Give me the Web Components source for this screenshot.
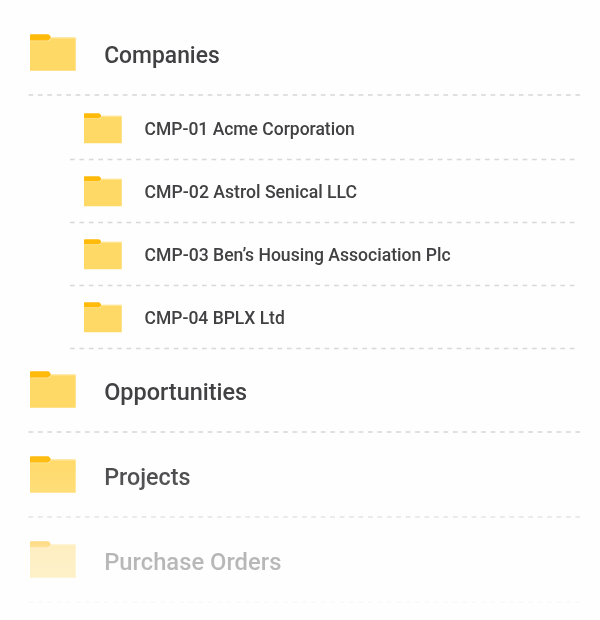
<!DOCTYPE html>
<html lang="en">
<head>
<meta charset="utf-8">
<title>Folders</title>
<style>
  body {
    margin: 0;
    background: #fefefe;
    color: #414042;
    font-family: Roboto, "Liberation Sans", sans-serif;
    font-weight: 500;
  }
</style>
</head>
<body>
<folder-tree>
  <folder-row label="Companies" fit="115.5"></folder-row>
  <folder-group>
    <folder-row small label="CMP-01 Acme Corporation" fit="210.2"></folder-row>
    <folder-row small label="CMP-02 Astrol Senical LLC" fit="212.5"></folder-row>
    <folder-row small label="CMP-03 Ben’s Housing Association Plc" fit="306"></folder-row>
    <folder-row small label="CMP-04 BPLX Ltd" fit="140.2"></folder-row>
  </folder-group>
  <folder-row label="Opportunities" fit="142.9"></folder-row>
  <folder-row label="Projects" fit="86.2"></folder-row>
  <folder-row label="Purchase Orders" fit="177.2"></folder-row>
</folder-tree>

<script>
class FolderTree extends HTMLElement {
  constructor() {
    super();
    this.attachShadow({ mode: 'open' }).innerHTML = `
      <style>
        :host {
          display: block;
          box-sizing: border-box;
          height: 620px;
          padding: 11px 19px 0 28px;
          overflow: hidden;
          -webkit-mask-image: linear-gradient(#000 450px, rgba(0,0,0,.88) 492px, rgba(0,0,0,.66) 517px, rgba(0,0,0,.52) 541px, rgba(0,0,0,.39) 549px, rgba(0,0,0,.35) 577px, rgba(0,0,0,.14) 602px, transparent 612px);
          mask-image: linear-gradient(#000 450px, rgba(0,0,0,.88) 492px, rgba(0,0,0,.66) 517px, rgba(0,0,0,.52) 541px, rgba(0,0,0,.39) 549px, rgba(0,0,0,.35) 577px, rgba(0,0,0,.14) 602px, transparent 612px);
        }
      </style>
      <slot></slot>
    `;
  }
}

class FolderGroup extends HTMLElement {
  constructor() {
    super();
    this.attachShadow({ mode: 'open' }).innerHTML = `
      <style>
        :host {
          display: block;
          padding: 1px 6px 0 42px;
          margin-bottom: -1px;
        }
      </style>
      <slot></slot>
    `;
  }
}

class FolderIcon extends HTMLElement {
  constructor() {
    super();
    this.attachShadow({ mode: 'open' }).innerHTML = `
      <style>
        :host { display: block; }
        svg { display: block; width: 100%; height: 100%; }
      </style>
      <svg viewBox="0 0 46 37" preserveAspectRatio="none">
        <path fill="#ffd966" d="M0 6h18.5l3-2.6H45q.7 0 .7.8v32.6H0z"/>
        <path fill="#ffe7a0" d="M0 7.2h17.5q2 0 3-1.5l1-1.3h24.2v-.8H20L17 6H0z"/>
        <path fill="#ffba0a" d="M0 1.2q0-.9 1-.9h16.5q1.5 0 2.3 1.2l.8 1.3q.4.8-.2 1.6L19 5.8q-.7.7-2 .7H0z"/>
      </svg>
    `;
  }
}

class FolderRow extends HTMLElement {
  constructor() {
    super();
    this.shadow = this.attachShadow({ mode: 'open' });
  }

  connectedCallback() {
    this.render();
  }

  render() {
    const small = this.hasAttribute('small');
    // the dashed rule is painted as one stroke so the dash length stays fixed
    this.shadow.innerHTML = `
      <style>
        :host {
          display: flex;
          flex-direction: column;
          height: 85px;
        }
        :host([small]) { height: 63px; }
        .row {
          flex: 1;
          display: flex;
          align-items: flex-start;
          gap: 28px;
          padding: 23px 0 0 2px;
        }
        folder-icon { width: 46px; height: 37px; }
        .label {
          display: block;
          height: 40px;
          width: 400px;
          overflow: visible;
          font-size: 24.4px;
          fill: currentColor;
        }
        .line { display: block; width: 100%; height: 2px; overflow: visible; }
        :host([small]) .row { gap: 22.5px; padding: 16px 0 0 13.5px; }
        :host([small]) folder-icon { width: 38px; height: 30.5px; }
        :host([small]) .label { font-size: 18.6px; height: 30px; }
      </style>
      <div class="row">
        <folder-icon></folder-icon>
        <svg class="label"><text x="${small ? 0.6 : 0.2}" y="${small ? 22.3 : 29}" textLength="${this.getAttribute('fit')}" lengthAdjust="spacingAndGlyphs">${this.getAttribute('label')}</text></svg>
      </div>
      <svg class="line"><path d="M${small ? 0 : 0.5} ${small ? 1.5 : 1}H${small ? 505 : 553}" stroke="${small ? '#d8d8d8' : '#e0e0e0'}" stroke-width="${small ? 1.3 : 2}" stroke-dasharray="4.7 4.73"/></svg>
    `;
  }
}

customElements.define('folder-icon', FolderIcon);
customElements.define('folder-row', FolderRow);
customElements.define('folder-group', FolderGroup);
customElements.define('folder-tree', FolderTree);
</script>
</body>
</html>
